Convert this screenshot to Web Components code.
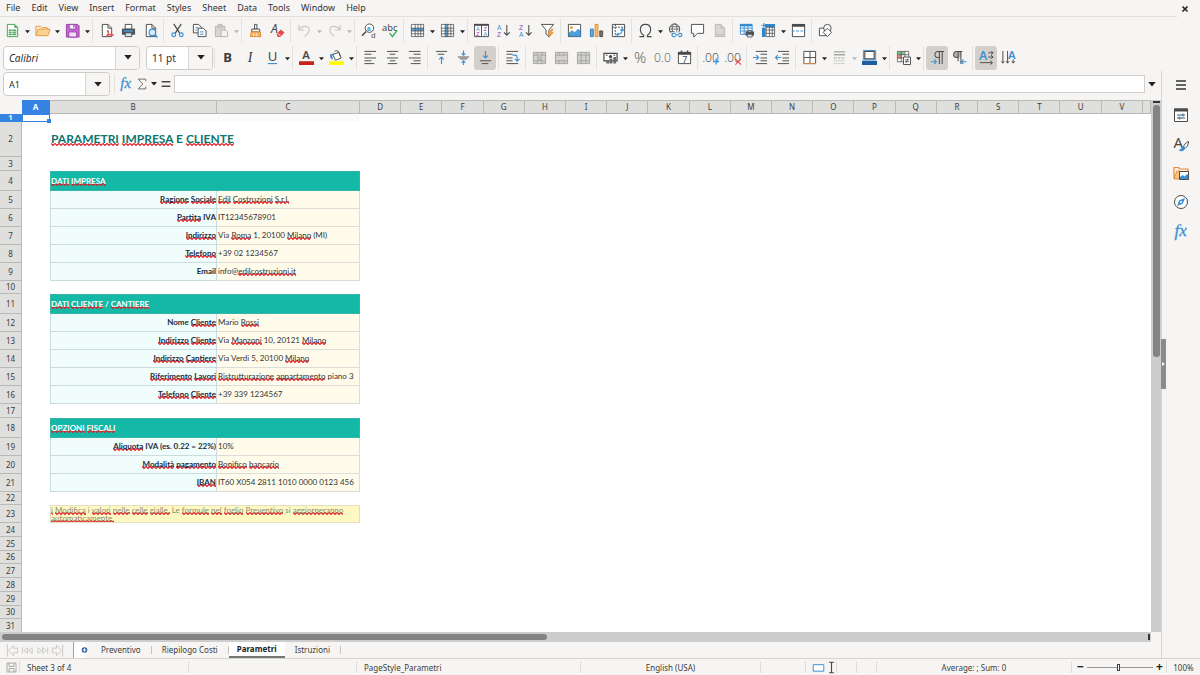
<!DOCTYPE html>
<html lang="en">
<head>
<meta charset="utf-8">
<title>Calc – Parametri</title>
<style>
html, body { margin: 0; height: 100%; }
body {
  font-family: "Noto Sans", sans-serif; font-size: 8px; color: #3c3c3c; background: #f6f5f3;
  --line: #d6d4d1; --accent: #3584e4;
}
calc-app { height: 100vh; }
</style>
</head>
<body>
<calc-app></calc-app>
<script>
const define = (name, html, setup) => {
  const template = document.createElement('template');
  template.innerHTML = '<style>*{box-sizing:border-box}button,input,select{font:inherit;color:inherit;margin:0}button{border:0;background:none;padding:0}</style>' + html;
  customElements.define(name, class extends HTMLElement {
    constructor() {
      super();
      this.attachShadow({ mode: 'open' }).append(template.content.cloneNode(true));
    }
    connectedCallback() {
      if (setup && !this.ready) { this.ready = true; setup(this, this.shadowRoot); }
    }
  });
};

/* ---------- icons, drawn on a 16 x 16 grid ---------- */
const K = '#4a4a4a', B = '#3b8fd4', G = '#a3a3a1', L = '#c9c8c6', P = '#a03cb0';
const lines = (ys, x1, x2, c = K) => ys.map((y, i) => `<path d="M${Array.isArray(x1) ? x1[i] : x1} ${y}H${Array.isArray(x2) ? x2[i] : x2}" stroke="${c}" fill="none"/>`).join('');
const tx = (s, x, y, size, fill = K, extra = '') => `<text x="${x}" y="${y}" font-size="${size}" fill="${fill}" ${extra}>${s}</text>`;
const SANS = 'font-family="Liberation Sans"';
const table = (hi = '') => `<path d="M1.5 1.5h13v13h-13z" fill="#fff"/>${hi}<path d="M1.5 1.5h13v13h-13zM1.5 5.5h13M1.5 8.5h13M1.5 11.5h13M5.5 1.5v13M8.5 1.5v13M11.5 1.5v13" fill="none" stroke="${K}" stroke-width=".8"/>`;
const page = (c = K, f = '#fff') => `<path d="M3.5 1.5h6l4 4v9h-10z" fill="${f}" stroke="${c}"/><path d="M9.5 1.5v4h4" fill="none" stroke="${c}"/>`;
const merge = `<path d="M1.5 2.5h13v12h-13z" fill="#d3d2d0"/><path d="M1.5 2.5h13v12h-13zM1.5 5.5h13M1.5 11.5h13M5.5 2.5v3M10.5 2.5v3M5.5 11.5v3M10.5 11.5v3" fill="none" stroke="${G}"/>`;
const ICONS = {
  new: `<path d="M2.5 1.5h8l3 3v10h-11z" fill="#fff" stroke="#3fa34d"/><path d="M10 1.5v3.5h4z" fill="#3fa34d"/><path d="M4 7h8v6H4z" fill="#43a854"/><path d="M4 9h8M4 11h8M7.5 7v6" stroke="#fff" stroke-width=".7"/>`,
  open: `<path d="M1 13V3.5h5l1.5 1.5H13V7" fill="#fdf0dc" stroke="#e59a38"/><path d="M1 13.5L3.5 6.5H16L13.8 13.5z" fill="#fbd194" stroke="#e59a38"/>`,
  save: `<path d="M1.5 1.5h12l1.5 1.5v12H1.5z" fill="#c46ad2" stroke="#9a3daa"/><path d="M4.5 1.5h7v5h-7z" fill="#f8eefa" stroke="#9a3daa"/><path d="M4 9.5h8.5V15H4z" fill="#f1dcf4" stroke="#9a3daa"/><path d="M9.5 2.5v2" stroke="#9a3daa" stroke-width="1.5"/>`,
  pdf: page() + `<path d="M7 15c2-2 3.5-5 3-6.5s-1.600 0 0 2.5 4 3 5 2.200-1.800-1.500-4-.7S8 14 7 15z" fill="#fff" stroke="#e5484d" stroke-width="1.100"/>`,
  print: `<path d="M4.5 1.5h7v5h-7z" fill="#fff" stroke="${K}"/><path d="M1 6h14v6.5H1z" fill="#4f5356"/><path d="M3 7.800h10v1.400H3z" fill="#4aa0de"/><path d="M4.5 10.5h7v4h-7z" fill="#cfe5f6" stroke="${K}"/>`,
  preview: page() + `<circle cx="10" cy="10" r="3.5" fill="#d6ebfa" stroke="${B}" stroke-width="1.2"/><path d="M12.5 12.5L15.5 15.5" stroke="${B}" stroke-width="1.5"/>`,
  cut: `<path d="M4 1l6.5 10M12 1L5.5 11" stroke="${K}" stroke-width="1.3" fill="none"/><circle cx="4" cy="12.5" r="2" fill="none" stroke="${B}" stroke-width="1.3"/><circle cx="12" cy="12.5" r="2" fill="none" stroke="${B}" stroke-width="1.3"/>`,
  copy: `<path d="M1.5 1.5h5.5l3 3v6H1.5z" fill="#fff" stroke="${K}"/><path d="M3.5 5h3M3.5 7.5h2" stroke="${B}"/><path d="M6.5 5.5h5.5l3 3v6H6.5z" fill="#fff" stroke="${K}"/><path d="M8.5 9.5h4M8.5 12h4" stroke="${B}"/>`,
  paste: `<path d="M1.5 3.5h10v11h-10z" fill="#d6d5d3" stroke="#b5b4b2"/><path d="M4.5 1.5h4v3h-4z" fill="#d6d5d3" stroke="#b5b4b2"/><path d="M7.5 7.5h5l2 2v5h-7z" fill="#f3f2f0" stroke="#b5b4b2"/>`,
  brush: `<path d="M7 1.5h2.5v5H7z" fill="#fff" stroke="${K}"/><path d="M4 6.5h8.5v3H4z" fill="#fff" stroke="${K}"/><path d="M3.5 9.5h9.5l.8 5H2.5z" fill="#f7b66a" stroke="#df8a2a"/><path d="M6 11v3M9 11v3" stroke="#fff" stroke-width=".8"/>`,
  clear: tx('A', 1, 11, 13, K, 'font-style="italic"') + `<path d="M7 11.5l4.5-4.5 4 3-4.5 5H8z" fill="#e5484d"/><path d="M8 10.700l3.300 3.300" stroke="#fff"/>`,
  undo: `<path d="M2 2v5.5h5.5M2.5 7C5 3 12 2 13 7c.5 3-2 5-5 7.5" fill="none" stroke="${L}" stroke-width="1.2"/>`,
  redo: `<path d="M14 2v5.5H8.5M13.5 7C11 3 4 2 3 7c-.5 3 2 5 5 7.5" fill="none" stroke="${L}" stroke-width="1.2"/>`,
  find: `<circle cx="9" cy="5.5" r="4.5" fill="#fff" stroke="${K}"/><path d="M5.5 9L1 13.5" stroke="${K}" stroke-width="1.600"/>` + tx('a', 6.5, 8, 7, B, 'font-weight="700" ' + SANS) + tx('d', 11, 15.5, 8, K, SANS),
  spell: tx('abc', -1, 8, 10) + `<path d="M7 10.5l3 4L15 8" fill="none" stroke="#3cae63" stroke-width="1.5"/>`,
  row: table(`<path d="M1 5.5h14v3H1z" fill="#5aaceb"/>`),
  col: table(`<path d="M5.5 1h3v14h-3z" fill="#5aaceb"/>`),
  sort: `<path d="M.5 1.5h15v13H.5z" fill="#fff" stroke="${K}"/><path d="M0 1h16v2H0z" fill="${K}"/><path d="M8 2v12" stroke="${K}"/>` + tx('A', 2, 8, 6, B, SANS) + tx('Z', 2, 14, 6, P, SANS) + tx('Z', 10, 8, 6, P, SANS) + tx('A', 10, 14, 6, B, SANS),
  az: tx('A', 1, 7, 7, B, SANS) + tx('Z', 1, 15, 7, P, SANS) + `<path d="M11.5 2v11M8.5 10l3 3 3-3" fill="none" stroke="${K}" stroke-width="1.100"/>`,
  za: tx('Z', 1, 7, 7, P, SANS) + tx('A', 1, 15, 7, B, SANS) + `<path d="M11.5 2v11M8.5 10l3 3 3-3" fill="none" stroke="${K}" stroke-width="1.100"/>`,
  filter: `<path d="M1.5 1.5h13l-5 6v7l-3-2.5v-4.5z" fill="#fff" stroke="${K}"/><path d="M12.5 6.5l-4 5h2.5l-1.500 4 5-5.5h-2.5l2-3.5z" fill="#f9a13e" stroke="#e38726" stroke-width=".6"/>`,
  image: `<path d="M1.5 1.5h13v13h-13z" fill="#fff" stroke="${K}"/><circle cx="4.700" cy="4.700" r="1.600" fill="#f2a03f"/><path d="M2 14v-3l3.5-3 2.5 2.5 4-4 2.5 3v5z" fill="#4d9fdd" stroke="#2974b0" stroke-width=".6"/>`,
  chart: `<path d="M1.5 6.5h3v8h-3z" fill="#5cb0ee" stroke="#2c7cba"/><path d="M6.5 1.5h3v13h-3z" fill="#fbbf74" stroke="#e08c2d"/><path d="M11.5 8.5h3v6h-3z" fill="#777" stroke="${K}"/>`,
  pivot: `<path d="M1.5 1.5h13v13h-13z" fill="#fff" stroke="${K}"/><path d="M1.5 4.5h13M4.5 1.5v13" stroke="${K}" stroke-dasharray="2 1"/><path d="M6 12.5c4 0 6-2 6-5.5M8 10.5l-2 2 2 2M10 8.500l2-2.5 2 2.5" fill="none" stroke="${B}" stroke-width="1.2"/>`,
  omega: `<path d="M1.5 14.5H6v-1.500C3.5 11.5 2.5 9.5 2.5 7 2.5 3.5 5 1.5 8 1.5s5.5 2 5.5 5.5c0 2.5-1 4.500-3.5 6v1.5h4.5" fill="none" stroke="${K}" stroke-width="1.2"/>`,
  link: `<circle cx="7" cy="6.5" r="5.5" fill="#fff" stroke="${K}"/><ellipse cx="7" cy="6.5" rx="2.5" ry="5.5" fill="none" stroke="${K}" stroke-width=".8"/><path d="M2 4h10M1.5 6.5h11M2 9h5" stroke="${K}" stroke-width=".8"/><path d="M3.5 10h12v6h-12z" fill="#f6f5f3"/><path d="M8 14.5H6a1.500 1.500 0 010-3.500h2M11.5 11h1.500a1.500 1.500 0 010 3.500h-1.500M7.5 12.700h4.5" fill="none" stroke="${B}" stroke-width="1.3"/>`,
  comment: `<path d="M1.5 1.5h13v9.5H8l-4 4v-4H1.5z" fill="#fff" stroke="${K}"/>`,
  header: page('#b9b8b6', '#d8d7d5') + `<path d="M4.5 12.5h8" stroke="#b9b8b6"/>`,
  area: `<path d="M1.5 1.5h12.5v10H1.5z" fill="#fff"/><path d="M1 1h13v2.5H1z" fill="#2f86cc"/><path d="M1.5 1.5h12.5v10.5H1.5zM1.5 5.5h12.5M1.5 8.5h12.5M5.5 3v9M9.5 3v9" fill="none" stroke="${B}"/><path d="M7 9h9v4.5H7z" fill="#4f5356"/><path d="M9.5 8h4v1.5h-4zM9 12h5v3H9z" fill="#cfe5f6" stroke="${K}" stroke-width=".8"/>`,
  freeze: `<path d="M1.5 1.5h13v13h-13z" fill="#fff"/><path d="M4 1h11v3.5H4zM1 5h4v10H1z" fill="#2f86cc"/><path d="M5.5 4.5h9v10h-9zM5.5 7.5h9M5.5 11h9M9 4.5v10M12 4.5v10" fill="none" stroke="${K}" stroke-width=".8"/><path d="M3 0v5M.5 2.5h5" stroke="#2f86cc"/>`,
  split: `<path d="M1.5 2.5h13v12h-13z" fill="#fff" stroke="${K}"/><path d="M1 1h14v3H1z" fill="${K}"/><path d="M1 8.5h14" stroke="${B}" stroke-width="1.2" stroke-dasharray="3 1.5"/>`,
  shapes: `<path d="M1.5 5.5h8v8h-8z" fill="#fff" stroke="${K}"/><circle cx="10" cy="5.5" r="4" fill="#fff" stroke="${K}"/><path d="M10 5.5l4.5 4.5-4.5 4.5L5.5 10z" fill="#fff" stroke="${K}"/>`,
  bold: tx('B', 2.5, 13, 14, '#3b3b3b', 'font-weight="700"'),
  italic: tx('I', 5, 13, 15, '#3b3b3b', 'font-style="italic" font-family="Liberation Serif"'),
  underline: tx('U', 3, 12, 14) + `<path d="M3 14.5h10" stroke="${B}" stroke-width="1.2"/>`,
  color: tx('A', 3.5, 10, 12, K, 'font-weight="600"') + `<path d="M0 12h16v4H0z" fill="#c9211e"/>`,
  fill: `<path d="M4 5l6-2.5 3 6L7 11z" fill="#fff" stroke="${K}"/><path d="M6 1.5c3-2 5 0 6 5" fill="none" stroke="${K}"/><path d="M1.5 9V5L6 3 3.5 5.5z" fill="#2f86cc"/><path d="M2 4.5L3.5 10" stroke="#2f86cc" stroke-width="1.5"/><path d="M0 12h16v4H0z" fill="#ff0"/>`,
  left: lines([1.5, 4.5, 8.5, 11.5, 14.5], 1.5, [14, 9, 14, 9, 12]),
  center: lines([1.5, 4.5, 8.5, 11.5, 14.5], [2, 5, 2, 5, 3], [14, 11, 14, 11, 13]),
  right: lines([1.5, 4.5, 8.5, 11.5, 14.5], [2, 7, 2, 7, 4], 14.5),
  top: lines([1.5, 4.5], [2, 4], [14, 11]) + `<path d="M8 15V7.5M5.5 10L8 7.5 10.5 10" fill="none" stroke="${B}" stroke-width="1.2"/>`,
  middle: lines([7.5, 9.5], [2, 4], [14, 12]) + `<path d="M8 .5v5M6 3.5L8 5.5l2-2M8 16v-4.5M6 13.5l2-2 2 2" fill="none" stroke="${B}" stroke-width="1.2"/>`,
  bottom: lines([11.5, 14.5], [2, 4], [14, 11]) + `<path d="M8 1v7.5M5.5 6L8 8.5 10.5 6" fill="none" stroke="${B}" stroke-width="1.2"/>`,
  wrap: lines([1.5, 4.5, 8.5, 11.5, 14.5], 1.5, [14, 8, 8, 8, 14]) + `<path d="M8 5.5h2.5c3 0 2.5 2 2.5 6M10.5 9.5l2.5 2.5 2.5-2.5" fill="none" stroke="${B}" stroke-width="1.2"/>`,
  merge1: merge + `<path d="M6 7.500h4v2.500H6z" fill="none" stroke="${G}"/>`, merge2: merge, merge3: merge + `<path d="M5.5 5.5v6M10.5 5.5v6" stroke="${G}"/>`,
  currency: `<path d="M1 3.500h14v8H1z" fill="#fff" stroke="${K}" stroke-width="1.3"/><path d="M3 5.500h2M11 5.500h2" stroke="${K}"/><circle cx="8" cy="7" r="1.800" fill="${K}"/><path d="M7 9h3v5.5H7zM11 7.500h3v7h-3zM3.500 11h3v3.500h-3z" fill="#6b6b6b"/>`,
  percent: tx('%', 1, 14, 16, '#666', 'font-weight="300"'),
  number: tx('0.0', -1, 13, 13, '#555', 'font-weight="300" font-family="Open Sans"'),
  date: `<path d="M1.5 2.5h13v12h-13z" fill="#fff" stroke="${K}"/><path d="M1 2h14v3H1zM4 .5h1.500v2H4zM10.500.5H12v2h-1.500z" fill="${K}"/>` + tx('7', 5.5, 13.5, 9.5),
  addDec: tx('.00', -2, 13, 13, '#555', 'font-weight="300"') + `<path d="M13 9v6.5M9.800 12.300h6.400" stroke="${B}" stroke-width="1.3"/>`,
  delDec: tx('.00', -2, 13, 13, '#555', 'font-weight="300"') + `<path d="M10 9.5l6 6M16 9.5l-6 6" stroke="#e5484d" stroke-width="1.2"/>`,
  indent: lines([1.5, 4.5, 8.5, 11.5, 14.5], [3, 8, 8, 8, 3], 15) + `<path d="M0 8h6M3.5 5.5L6 8l-2.5 2.5" fill="none" stroke="${B}" stroke-width="1.2"/>`,
  outdent: lines([1.5, 4.5, 8.5, 11.5, 14.5], [3, 8, 8, 8, 3], 15) + `<path d="M0.5 8h6M3 5.5L.5 8 3 10.5" fill="none" stroke="${B}" stroke-width="1.2"/>`,
  borders: `<path d="M2 1.5h12.5v13H2zM8.5 1.5v13M2 8h12.5" fill="#fff" stroke="${K}"/><path d="M1.5 14.5h13.5" stroke="#e8893a"/>`,
  lineStyle: `<path d="M2 2h12M2 5h12" stroke="${G}" stroke-width="1.5"/><path d="M2 8.5h12" stroke="${G}" stroke-dasharray="3 1"/><path d="M2 11.5h12M2 14.5h12" stroke="${G}" stroke-dasharray="1 1"/>`,
  lineColor: `<path d="M3 1.5h10v8H3z" fill="#fff" stroke="${K}" stroke-width="1.2"/><path d="M1.5.5h13v10h-13z" fill="none" stroke="${B}"/><path d="M0 11.5h16V16H0z" fill="#1c5f9f"/>`,
  cond: `<path d="M1.5 1.5h12v11h-12z" fill="#fff"/><path d="M2 2h7v3H2z" fill="#6fcf7d"/><path d="M2 5h4v4H2z" fill="#f28b85"/><path d="M1.5 1.5h12v11h-12zM1.5 5h12M1.5 8.5h12M5.5 1.5v11M9.5 1.5v11" fill="none" stroke="${K}" stroke-width=".8"/><path d="M8 7.5h7.5v8H8z" fill="#fff" stroke="${K}"/><path d="M9.5 10.5H14M9.5 12.5H14M13 9l-2.5 5" stroke="${K}" stroke-width=".8"/>`,
  ltr: `<path d="M15 1.5H8.5a3 3 0 000 6.5h1M10 1.5V15M13 1.5V15" fill="none" stroke="${K}" stroke-width="1.100"/><path d="M1 12.5h5.5M4.5 10l2.300 2.500L4.5 15" fill="none" stroke="${B}" stroke-width="1.2"/>`,
  rtl: `<path d="M5 1.500h4.500V8H5a3 3 0 010-6.500z" fill="#b5b5b3"/><path d="M11 1.5H5a3 3 0 000 6.5h1M6.5 1.5V12M9.5 1.5V15" fill="none" stroke="${K}" stroke-width="1.100"/><path d="M15.5 12.5H10M12.200 10L10 12.500l2.200 2.500" fill="none" stroke="${B}" stroke-width="1.2"/>`,
  horiz: tx('A', 0, 11, 13, B, 'font-weight="600"') + `<path d="M10 3h5M10 7.5h5M1 13.5h13M13 1l2 2-2 2M13 5.5l2 2-2 2M12 11.5l2.5 2-2.5 2" fill="none" stroke="${K}"/>`,
  vert: tx('A', 7.5, 10, 12, B, 'font-weight="600"') + `<path d="M2 1v13M7 1v13M13 10v4M.5 12L2 14l1.500-2M5.5 12L7 14l1.500-2M11.5 12l1.500 2 1.500-2" fill="none" stroke="${K}"/>`,
  fx: tx('fx', 1.5, 13, 17, B, 'font-style="italic" font-family="Liberation Serif" stroke="#3b8fd4" stroke-width=".3"'),
  sum: `<path d="M13 4.5V1.5H3l6 6.5-6 6.5h10v-3" fill="none" stroke="${K}"/>`,
  equals: `<path d="M3 5.5h10M3 10.5h10" stroke="${K}" stroke-width="1.800"/>`,
  burger: `<path d="M3 4h10M3 8h10M3 12h10" stroke="#333" stroke-width="1.400"/>`,
  props: `<path d="M1.5 2h13v12.5h-13z" fill="#fff" stroke="${K}"/><path d="M1 1.5h14v3H1z" fill="${K}"/><path d="M4 8h8M4 11h8" stroke="${K}"/><path d="M10 6.5v3M6.5 9.5v3" stroke="${B}" stroke-width="1.5"/>`,
  styles: tx('A', 0.5, 12, 15, K) + `<path d="M15.5 5.5c-3 1-5 4-5 6l1.5 1c2.5-2 3.500-4.500 3.500-7z" fill="#fff" stroke="${K}"/><path d="M11 10.5c-3 0-2.500 3-5.500 4 3 1.500 7 .5 6.500-3z" fill="${B}"/>`,
  gallery: `<path d="M1 13.5V2.5h4.5l1.5 1.5h8v3" fill="#fdf0dc" stroke="#e8893a" stroke-width="1.2"/><path d="M1 14l3-8h3v8z" fill="#fbc87c" stroke="#e8893a"/><path d="M6.5 6.5h9v8h-9z" fill="#fff" stroke="${K}"/><path d="M7 14v-2l2.5-2 2 1.500L14 9l1 1v4z" fill="${B}"/>`,
  compass: `<circle cx="8" cy="8" r="6.5" fill="#fff" stroke="${K}"/><path d="M12 4L9.800 9.800 4 12l2.200-5.800z" fill="${B}"/><circle cx="8" cy="8" r="1.100" fill="#fff"/>`,
  close: `<path d="M5.5 5.5l5 5M10.5 5.5l-5 5" stroke="#222" stroke-width="1.600"/>`,
  disk: `<path d="M1.500 1.500h13v13h-13zM4.500 1.500v5h7v-5M4.500 14.500v-5h7v5" fill="none" stroke="${G}" stroke-width="1.300"/>`,
  first: `<path d="M2.5 1.5v13M13.5 5.5H9v-3L3.5 8 9 13.5v-3h4.5z" fill="none" stroke="${L}"/>`,
  prev: `<path d="M2.5 4.5v7M8 5v6L4 8zM13 5v6L9 8z" fill="none" stroke="${L}"/>`,
  next: `<path d="M13.5 4.5v7M8 5v6l4-3zM3 5v6l4-3z" fill="none" stroke="${L}"/>`,
  last: `<path d="M13.5 1.5v13M2.5 5.5H7v-3L12.5 8 7 13.5v-3H2.5z" fill="none" stroke="${L}"/>`,
  add: `<path d="M0 0h11v16H0z" fill="#fff"/><path d="M-.5 0v16" stroke="${G}"/><circle cx="10.5" cy="8" r="2.800" fill="#2a62a8"/><path d="M10.5 6.300v3.400M8.800 8h3.400" stroke="#fff"/>`,
  selmode: `<path d="M1.5 4.500h13v8h-13z" fill="#fff" stroke="${B}" stroke-width="1.2"/>`,
  caret: `<path d="M8 2v12M5 1.500h6M5 14.500h6" stroke="${K}" stroke-width="1.4" fill="none"/>`,
};
define('app-icon', `<style>:host{display:block;width:16px;height:16px;flex:none}svg{display:block;overflow:visible;width:100%;height:100%;font-family:"Noto Sans",sans-serif}</style><svg viewBox="0 0 16 16" aria-hidden="true"></svg>`,
  (el, root) => { root.querySelector('svg').innerHTML = ICONS[el.getAttribute('name')] || ''; });

define('drop-arrow', `<style>:host{display:block;width:6px;height:4px;color:#222}svg{display:block;width:100%;height:100%}</style><svg viewBox="0 0 6 4" aria-hidden="true"><path d="M0 0h6L3 3.5z" fill="currentColor"/></svg>`);

/* ---------- toolbar parts ---------- */
define('tool-button', `
<style>
:host{display:flex;flex:none;height:24px}
button{display:grid;place-items:center}
.main{width:22px;border-radius:3px}
:host([active]) .main{background:#d3d0cc}
.more{width:8px;padding-top:2px}
:host(:not([arrow])) .more{display:none}
drop-arrow{width:5px}
:host([off]) drop-arrow{color:#b9b8b6}
app-icon{width:15px;height:15px}
</style>
<button class="main" type="button"><app-icon></app-icon></button><button class="more" type="button" aria-label="More"><drop-arrow></drop-arrow></button>`,
  (el, root) => {
    const name = el.getAttribute('icon');
    const icon = document.createElement('app-icon');
    icon.setAttribute('name', name);
    root.querySelector('app-icon').replaceWith(icon);
    root.querySelector('.main').setAttribute('aria-label', name);
  });

define('tool-group', `<style>:host{display:flex;flex:none;align-items:center;border-right:1px solid #e4e2df;padding-right:2px;margin-right:2px}:host([tight]){padding-right:1px}:host([last]){border:0}</style><slot></slot>`);
define('tool-bar', `<style>:host{display:flex;align-items:center;height:27px;padding:0 1px;overflow:hidden}</style><slot></slot>`);

define('combo-box', `
<style>
:host{display:grid;grid-template-columns:1fr 24px;height:24px;flex:none;border:1px solid #cfccc8;border-radius:4px;background:#fff;overflow:hidden}
select{grid-area:1/1/2/3;appearance:none;border:0;background:none;padding:0 0 0 5px;font-size:10px;color:#2e2e2e;outline:0;width:100%}
span{grid-area:1/2;display:grid;place-items:center;border-left:1px solid #d8d5d2;background:#f6f5f3;pointer-events:none}
drop-arrow{width:8px;height:5px}
:host([slanted]) select{font-style:italic}
:host([small]) select{font-size:9px}
</style>
<select><option></option></select><span><drop-arrow></drop-arrow></span>`,
  (el, root) => {
    root.querySelector('option').textContent = el.getAttribute('value');
    root.querySelector('select').setAttribute('aria-label', el.getAttribute('label'));
  });

define('menu-bar', `
<style>
:host{display:grid;grid-template-columns:1fr 23px;align-items:center}
nav{display:flex;align-items:center;height:17px;padding-left:1px;border-bottom:1px solid #e2e0dd}
nav button{padding:0 6px 0 5px;font-size:9px;line-height:16px;color:#333}
</style>
<nav></nav><button type="button" aria-label="Close"><app-icon name="close"></app-icon></button>`,
  (el, root) => {
    root.querySelector('nav').innerHTML = 'File Edit View Insert Format Styles Sheet Data Tools Window Help'.split(' ')
      .map(t => `<button type="button">${t}</button>`).join('');
  });

define('formula-bar', `
<style>
:host{display:flex;align-items:center;height:29px;padding:0 3px 3px}
combo-box{width:107px}
.tools{display:flex;align-items:center;padding-left:3px;border-left:1px solid #e4e2df;margin-left:4px}
button{display:grid;place-items:center;height:20px;width:14px}
button app-icon{width:14px;height:14px}
.fx{width:16px;margin-right:1px}
input{flex:1;min-width:0;height:18px;border:1px solid #d3d0cd;background:#fff;padding:0 4px;margin-left:1px;outline:0}
.open{width:13px}
.open drop-arrow{width:8px;height:5px}
.more{width:10px}
.sum app-icon{width:12px;height:12px}
</style>
<combo-box small label="Name Box" value="A1"></combo-box>
<div class="tools">
<button class="fx" type="button" aria-label="Function Wizard"><app-icon name="fx"></app-icon></button>
<button class="sum" type="button" aria-label="Select Function"><app-icon name="sum"></app-icon></button>
<button class="more" type="button" aria-label="More functions"><drop-arrow></drop-arrow></button>
<button type="button" aria-label="Formula"><app-icon name="equals"></app-icon></button>
</div>
<input type="text" aria-label="Input line"><button class="open" type="button" aria-label="Expand"><drop-arrow></drop-arrow></button>`);

/* ---------- spreadsheet: *word* marks a word the spell checker flags ---------- */
const ROWS = [
  [8, 'blank'], [35, 'title', '*PARAMETRI* *IMPRESA* E *CLIENTE*'], [14],
  [20, 'head', '*DATI* *IMPRESA*'],
  [18, 'pair', '*Ragione* *Sociale*', '*Edil* *Costruzioni* *S.r.l.*'],
  [18, 'pair', '*Partita* IVA', 'IT12345678901'],
  [18, 'pair', '*Indirizzo*', 'Via *Roma* 1, 20100 *Milano* (MI)'],
  [18, 'pair', '*Telefono*', '+39 02 1234567'],
  [18, 'pair', 'Email', 'info@*edilcostruzioni.it*'],
  [13],
  [20, 'head', '*DATI* *CLIENTE* / *CANTIERE*'],
  [18, 'pair', 'Nome *Cliente*', 'Mario *Rossi*'],
  [18, 'pair', '*Indirizzo* *Cliente*', 'Via *Manzoni* 10, 20121 *Milano*'],
  [18, 'pair', '*Indirizzo* *Cantiere*', 'Via Verdi 5, 20100 *Milano*'],
  [18, 'pair', '*Riferimento* *Lavori*', '*Ristrutturazione* *appartamento* piano 3'],
  [18, 'pair', '*Telefono* *Cliente*', '+39 339 1234567'],
  [14],
  [20, 'head', '*OPZIONI* *FISCALI*'],
  [18, 'pair', '*Aliquota* IVA (es. 0.22 = 22%)', '10%'],
  [18, 'pair', '*Modalità* *pagamento*', '*Bonifico* *bancario*'],
  [18, 'pair', '*IBAN*', 'IT60 X054 2811 1010 0000 0123 456'],
  [13],
  [18, 'note', '*ℹ* *Modifica* i *valori* *nelle* *celle* *gialle.* Le *formule* *nel* *foglio* *Preventivo* si *aggiorneranno* *automaticamente.*'],
  [14], [14], [13], [14], [14], [14], [13], [14],
];
const spell = s => s.replace(/\*([^*]+)\*/g, '<u>$1</u>');
define('calc-sheet', `
<style>
:host{display:block;overflow:hidden;background:#fff;min-height:0;min-width:0}
table{width:100%;table-layout:fixed;border-collapse:separate;border-spacing:0}
.rh{width:22px}.a{width:28px}.b{width:167px}.c{width:143px}.end{width:8px}
th,td{padding:0;overflow:hidden;white-space:nowrap;line-height:8px}
th{font-weight:400;font-size:8px;color:#3c3c3c;background:#dfdfde;border-right:1px solid #b9b9b8;border-bottom:1px solid #b9b9b8;text-align:center}
thead th{height:14px;border-top:1px solid #b9b9b8}
thead th:first-child{background:#f6f5f3;border-color:#f6f5f3}
th.on{background:var(--accent);color:#fff;font-weight:700;border-color:var(--accent)}
tbody th.on{font-size:7px;line-height:7px;overflow:visible}
td{font-family:Lato,sans-serif;color:#333;vertical-align:middle}
u{text-decoration:none;background:url("data:image/svg+xml,%3Csvg xmlns='http://www.w3.org/2000/svg' width='4' height='3'%3E%3Cpath d='M-1 1.500L0 .5 2 2.500 4 .5 5 1.500' fill='none' stroke='%23e01b24' stroke-width='1.100'/%3E%3C/svg%3E") 0 100%/4px 3px repeat-x}
.cursor{position:relative;overflow:visible;border:1px solid var(--accent)}
.cursor::after{content:"";position:absolute;right:-2px;bottom:-2px;width:4px;height:4px;background:var(--accent)}
.tint{background:#fafbfc}
.title{font-size:12px;line-height:18px;font-weight:700;color:#0f766e;padding:0 0 1px 1px}
.head,.label,.value{font-size:8px;line-height:10px}
.head{font-weight:700;color:#fff;background:#14b8a6;border:1px solid #35b5a8}
.label{font-weight:700;text-align:right;color:#1e293b;background:#f0fdfa;border:1px solid #cbdcdf;border-top:0;padding-bottom:1px}
.value{background:#fffbeb;padding:0 0 1px 1px;border:1px solid #dcdcd8;border-width:0 1px 1px 0}
.note{white-space:normal;font-size:8px;color:#8b8b78;background:#fef9c3;border:1px solid #e5dfc0;padding-right:8px}
</style>
<table><colgroup><col class="rh"><col class="a"><col class="b"><col class="c"></colgroup><thead></thead><tbody></tbody></table>`,
  (el, root) => {
    const letters = [...'ABCDEFGHIJKLMNOPQRSTUV'];
    root.querySelector('colgroup').insertAdjacentHTML('beforeend', '<col>'.repeat(19) + '<col class="end">');
    root.querySelector('thead').innerHTML = '<tr><th></th>' + letters.map(c => `<th scope="col"${c === 'A' ? ' class="on"' : ''}>${c}</th>`).join('') + '<th></th></tr>';
    const rest = '<td colspan="20"></td>';
    root.querySelector('tbody').innerHTML = ROWS.map(([h, kind, x, y], i) => {
      const body = kind === 'pair' ? `<td></td><td class="label">${spell(x)}</td><td class="value">${spell(y)}</td>${rest}`
        : kind === 'blank' ? `<td class="cursor"></td><td class="tint" colspan="2"></td>${rest}`
        : kind ? `<td></td><td class="${kind}" colspan="2">${spell(x)}</td>${rest}`
        : `<td></td><td colspan="2"></td>${rest}`;
      return `<tr style="height:${h}px"><th scope="row"${i ? '' : ' class="on"'}>${i + 1}</th>${body}</tr>`;
    }).join('');
  });

define('scroll-rail', `
<style>
:host{display:grid;background:#cdcdcd}
:host([dir=v]){grid-template-rows:3px 47fr 51fr;padding:1px 1px 0 2px;gap:1px}
:host([dir=h]){grid-template-columns:545fr 600fr 2px;padding:2px 1px 2px 2px}
i{background:#828482;border-radius:3px}
:host([dir=v]) b{background:#333;height:2px;order:-1}
:host([dir=h]) b{background:#333;grid-column:3}
</style><i></i><b></b>`);

define('sheet-tabs', `
<style>
:host{display:flex;height:16px;align-items:stretch;color:#3c3c3c}
.nav{display:flex;align-items:center;padding-left:5px;width:73px}
.nav button{width:15px}
.nav app-icon{width:15px;height:15px}
.add{width:18px;display:grid;place-items:center}
.tab{padding:0 11px 0 10px;line-height:14px}
.tab.sep{background:linear-gradient(#c4c2bf,#c4c2bf) 100% 50%/1px 8px no-repeat}
.tab.on{background:#fff;font-weight:700;border-bottom:2px solid #777;color:#222;padding:0 8px}
</style>
<div class="nav"><button type="button" aria-label="First"><app-icon name="first"></app-icon></button><button type="button" aria-label="Previous"><app-icon name="prev"></app-icon></button><button type="button" aria-label="Next"><app-icon name="next"></app-icon></button><button type="button" aria-label="Last"><app-icon name="last"></app-icon></button></div>
<button class="add" type="button" aria-label="Add sheet"><app-icon name="add"></app-icon></button>
<button class="tab sep" type="button">Preventivo</button><button class="tab sep" type="button">Riepilogo Costi</button><button class="tab on" type="button">Parametri</button><button class="tab sep" type="button">Istruzioni</button>`);

define('status-bar', `
<style>
:host{display:grid;grid-template-columns:20px 169px 168px 224px 180px 45px 31px 20px 20px 1fr 95px 33px;height:17px;border-top:1px solid var(--line);align-items:center}
:host>*{min-width:0}
div{display:flex;align-items:center;height:12px;border-right:1px solid #dfddda;white-space:nowrap}
div:last-child{border:0;justify-content:center}
.mid{justify-content:center}
.text{padding-left:7px}
.disk app-icon{width:11px;height:11px;margin-left:6px}
.mode{padding-left:6px;gap:-2px}
.mode app-icon{width:13px;height:13px}
.zoom{gap:2px;padding:0 2px 0 4px}
.zoom button{width:9px;height:12px;font-size:12px;font-weight:700;line-height:10px;color:#222}
input{appearance:none;flex:1;min-width:0;height:9px;background:linear-gradient(#999,#999) 0 50%/100% 1px no-repeat}
input::-webkit-slider-thumb{appearance:none;width:3px;height:7px;border:1px solid #444;background:#fff}
</style>
<div class="disk"><app-icon name="disk"></app-icon></div><div class="text">Sheet 3 of 4</div><div></div><div class="text">PageStyle_Parametri</div><div class="mid">English (USA)</div><div></div>
<div class="mode"><app-icon name="selmode"></app-icon><app-icon name="caret"></app-icon></div><div></div><div></div><div class="mid">Average: ; Sum: 0</div>
<div class="zoom"><button type="button" aria-label="Zoom out">−</button><input type="range" min="0" max="100" value="48" aria-label="Zoom"><button type="button" aria-label="Zoom in">+</button></div><div>100%</div>`);

define('side-bar', `
<style>
:host{display:flex;flex-direction:column;align-items:center;gap:13px;border-left:1px solid var(--line);padding-top:6px;position:relative}
button app-icon{width:16px;height:16px}
button:first-of-type{margin-bottom:1px}
.grip{position:absolute;left:-1px;top:50%;margin-top:-26px;width:5px;height:50px;background:#8b8b89;display:grid;place-items:center}
.grip::after{content:"";border:2px solid transparent;border-left:3px solid #fff;border-right:0}
</style>
<div class="grip"></div>
<button type="button" aria-label="Sidebar settings"><app-icon name="burger"></app-icon></button><button type="button" aria-label="Properties"><app-icon name="props"></app-icon></button><button type="button" aria-label="Styles"><app-icon name="styles"></app-icon></button><button type="button" aria-label="Gallery"><app-icon name="gallery"></app-icon></button><button type="button" aria-label="Navigator"><app-icon name="compass"></app-icon></button><button type="button" aria-label="Functions"><app-icon name="fx"></app-icon></button>`);

/* toolbar contents: "+" adds a drop-down arrow, "!" marks pressed, "-" marks unavailable */
const bar = spec => spec.map((g, i) => {
  const items = g.split(' ');
  const attrs = (items.at(-1).includes('+') ? ' tight' : '') + (i === spec.length - 1 ? ' last' : '');
  return `<tool-group${attrs}>` + items.map(t => `<tool-button icon="${t.replace(/[+!-]/g, '')}"${t.includes('+') ? ' arrow' : ''}${t.includes('!') ? ' active' : ''}${t.includes('-') ? ' off' : ''}></tool-button>`).join('') + '</tool-group>';
}).join('');
const STANDARD = ['new+ open+ save+', 'pdf print preview', 'cut copy paste+-', 'brush clear', 'undo+- redo+-', 'find spell', 'row+ col+', 'sort az za filter', 'image chart pivot', 'omega+ link comment header', 'area freeze+ split', 'shapes'];
const FORMATTING = ['bold italic underline+', 'color+ fill+', 'left center right', 'top middle bottom!', 'wrap', 'merge1 merge2 merge3', 'currency+ percent number date', 'addDec delDec', 'indent outdent', 'borders+ lineStyle+- lineColor+', 'cond+', 'ltr! rtl', 'horiz! vert'];

define('calc-app', `
<style>
:host{display:grid;grid-template-rows:auto auto auto minmax(0,1fr) auto;overflow:hidden}
.font{width:137px;margin:0 6px 0 2px}
.size{width:67px;margin-right:1px}
.size+i{width:1px;height:20px;margin:0 2px 0 0;background:#e4e2df;flex:none}
.work{display:grid;grid-template-columns:minmax(0,1fr) 39px;min-height:0}
.doc{display:grid;grid-template-columns:minmax(0,1fr) 10px;grid-template-rows:29px minmax(0,1fr) 10px 16px;min-height:0}
formula-bar,sheet-tabs{grid-column:1/3}
</style>
<menu-bar></menu-bar>
<tool-bar>${bar(STANDARD)}</tool-bar>
<tool-bar><combo-box class="font" slanted label="Font Name" value="Calibri"></combo-box><combo-box class="size" label="Font Size" value="11 pt"></combo-box><i></i>${bar(FORMATTING)}</tool-bar>
<div class="work">
  <div class="doc">
    <formula-bar></formula-bar>
    <calc-sheet></calc-sheet><scroll-rail dir="v"></scroll-rail>
    <scroll-rail dir="h"></scroll-rail><span></span>
    <sheet-tabs></sheet-tabs>
  </div>
  <side-bar></side-bar>
</div>
<status-bar></status-bar>`);
</script>
</body>
</html>
